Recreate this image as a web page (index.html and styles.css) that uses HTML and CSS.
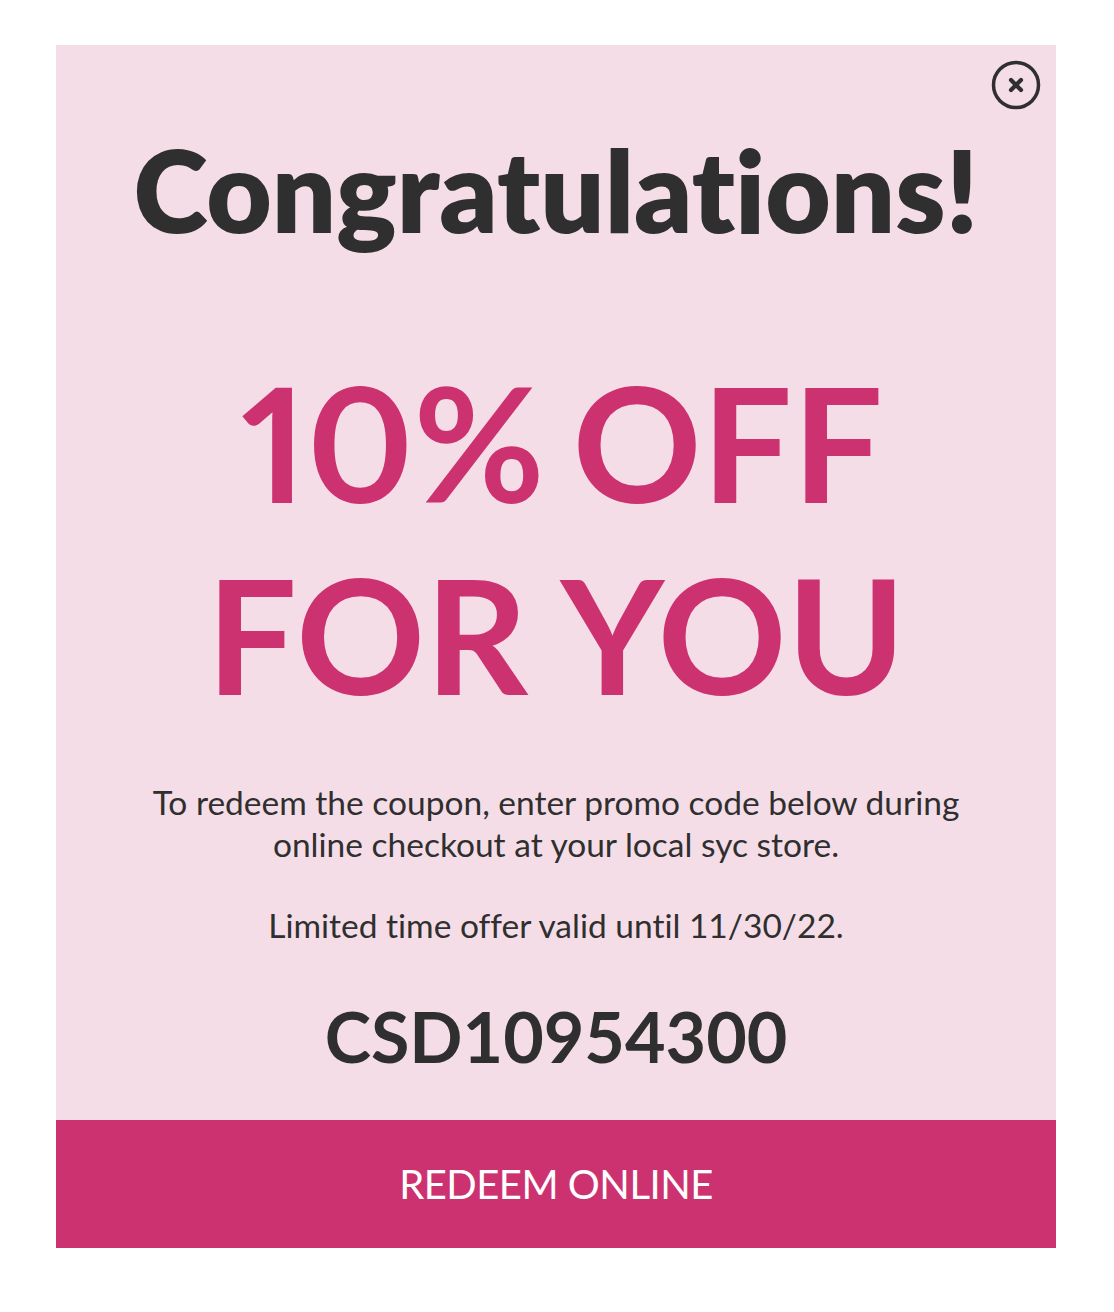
FILE: index.html
```html
<!DOCTYPE html>
<html lang="en">
<head>
<meta charset="utf-8">
<title>Congratulations</title>
<link rel="stylesheet" href="styles.css">
</head>
<body>
<div class="card">
  <button class="close" aria-label="Close">
    <svg width="50" height="50" viewBox="0 0 50 50">
      <circle cx="25" cy="25" r="22.5" fill="none" stroke="#2f2f2f" stroke-width="3.5"/>
      <path d="M20 20 L30 30 M30 20 L20 30" stroke="#2f2f2f" stroke-width="4.2" stroke-linecap="round"/>
    </svg>
  </button>
  <div class="content">
    <h1 class="title">Congratulations!</h1>
    <div class="promo"><span class="pct">10%</span> OFF<br>FOR YOU</div>
    <p class="info">To redeem the coupon, enter promo code below during<br>online checkout at your local syc store.</p>
    <p class="valid">Limited time offer valid until 11/30/22.</p>
    <div class="code">CSD10954300</div>
  </div>
  <a class="redeem" href="#">REDEEM ONLINE</a>
</div>
</body>
</html>
```

FILE: styles.css
```css
* { box-sizing: border-box; }
html, body { margin: 0; padding: 0; background: #ffffff; }
body {
  font-family: Lato, "Open Sans", sans-serif;
  font-variant-ligatures: none;
  padding: 45px 58px 0 56px;
}
.card {
  position: relative;
  width: 1000px;
  background: #f5dde7;
  display: flex;
  flex-direction: column;
}
.close {
  position: absolute;
  top: 15px;
  right: 15px;
  width: 50px;
  height: 50px;
  padding: 0;
  border: 0;
  background: transparent;
  display: flex;
}
.content {
  display: flex;
  flex-direction: column;
  align-items: center;
  text-align: center;
  padding: 88px 0 49px;
  color: #2f2f2f;
}
.title {
  margin: 0;
  font-size: 113px;
  line-height: 1;
  font-weight: 800;
  color: #2f2f2f;
}
.promo {
  margin-top: 99px;
  font-size: 160px;
  line-height: 192px;
  font-weight: 700;
  font-variant-numeric: proportional-nums;
  color: #cd3270;
}
.pct {
  margin-left: 12px;
  margin-right: -11px;
}
.info {
  margin: 52px 0 0;
  font-size: 33.5px;
  line-height: 42px;
  font-weight: 400;
}
.valid {
  margin: 39px 0 0;
  font-size: 33.5px;
  line-height: 42px;
  font-weight: 400;
}
.code {
  margin-top: 55px;
  font-size: 70px;
  line-height: 1;
  font-weight: 700;
}
.redeem {
  height: 128px;
  background: #cd3270;
  color: #ffffff;
  text-decoration: none;
  display: flex;
  align-items: center;
  justify-content: center;
  font-size: 40px;
  line-height: 48px;
  font-weight: 400;
  letter-spacing: -0.5px;
}
```
